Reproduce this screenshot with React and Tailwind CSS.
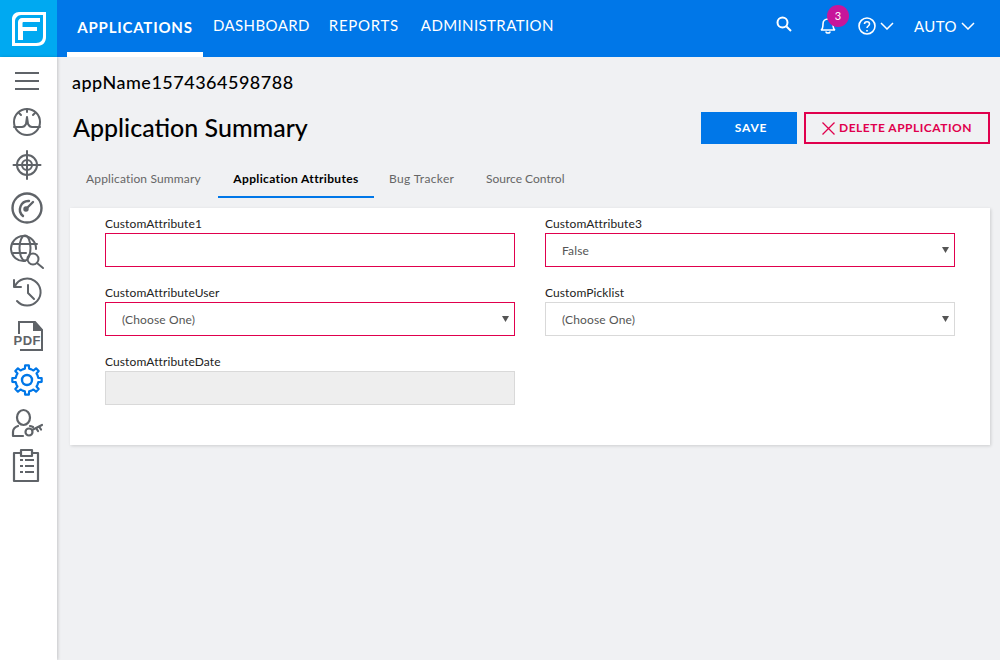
import React from 'react';

const font = { fontFamily: '"Lato", "Open Sans", sans-serif' };

const Logo = () => (
    <svg width="36" height="36" viewBox="0 0 36 36" fill="none">
        <path d="M8 1h27v25c0 5-3 9-9 9H1V8c0-4 3-7 7-7z" fill="#fff" />
        <path d="M10 4h22v21c0 4-2 7-7 7H4V10c0-3 3-6 6-6z" fill="#00a9f1" />
        <path d="M11 7h18v4H12.500c-.5 0-1 .5-1 1v4H26v4H12v9H7V11c0-2 2-4 4-4z" fill="#fff" />
    </svg>
);

// eight toothed gear outline, radius in px
const gearPath = (() => {
    const pts = [];
    const teeth = 8;
    for (let i = 0; i < teeth; i++) {
        const a = (i / teeth) * Math.PI * 2;
        const step = (Math.PI * 2) / teeth;
        [[-0.5, 11.5], [-0.24, 11.5], [-0.16, 14.8], [0.16, 14.8], [0.24, 11.5], [0.5, 11.5]].forEach(([f, r]) => {
            const t = a + f * step;
            pts.push(`${(Math.cos(t) * r).toFixed(2)} ${(Math.sin(t) * r).toFixed(2)}`);
        });
    }
    return `M${pts.join('L')}Z`;
})();

// sidebar drawings, centred on 0,0
const Icon = ({ children, color = '#5f6368', width = 2 }) => (
    <svg width="40" height="40" viewBox="-20 -20 40 40" fill="none" stroke={color} strokeWidth={width} strokeLinecap="round" strokeLinejoin="round">
        {children}
    </svg>
);

const sideItems = [
    {
        slot: 'h-[41px]',
        icon: (
            <Icon>
                <path d="M-12-8h24M-12 0h24M-12 8h24" strokeLinecap="butt" />
            </Icon>
        ),
    },
    {
        slot: 'h-[42px]',
        icon: (
            <Icon>
                <circle cx="0" cy="0" r="13" />
                <path d="M-13 5h8c2 0 3-1 4-3l1-7 1 7c1 2 2 3 4 3h8M0-13v3M-8-9l2 2M8-9l-2 2" />
            </Icon>
        ),
    },
    {
        slot: 'h-[43px]',
        icon: (
            <Icon>
                <circle cx="0" cy="0" r="10" />
                <circle cx="0" cy="0" r="5" />
                <path d="M-13.500 0h27M0-14v28" />
            </Icon>
        ),
    },
    {
        slot: 'h-[44px]',
        icon: (
            <Icon width={2.4}>
                <circle cx="0" cy="0" r="14.500" />
                <path d="M-4 8a8.500 8.500 0 0 1 6-15M-2 2l8-8" />
                <circle cx="-1" cy="1" r="1.500" />
            </Icon>
        ),
    },
    {
        slot: 'h-[40px]',
        icon: (
            <Icon>
                <path d="M9-1a12.500 12.500 0 1 0-11 12" />
                <ellipse cx="-2" cy="-2" rx="5.500" ry="12.500" />
                <path d="M-14-6h24M-14 3h13" />
                <circle cx="6" cy="9" r="5.500" />
                <path d="M10 13l6 5" />
            </Icon>
        ),
    },
    {
        slot: 'h-[44px]',
        icon: (
            <Icon>
                <path d="M-12-6A13.500 13.500 0 1 1-10 9" />
                <path d="M-13-12v7h7M1-7V1l6 6" />
            </Icon>
        ),
    },
    {
        slot: 'h-[44px]',
        icon: (
            <div className="relative ml-[3px] h-[32px] w-[30px]">
                <svg width="30" height="32" viewBox="0 0 30 32" fill="none" stroke="#5f6368" strokeWidth="2">
                    <path d="M5 14V2h16l7 8v20H6" />
                    <path d="M20 2v8h8" fill="#5f6368" />
                </svg>
                <span className="absolute left-0 top-[14px] text-[13px] font-black leading-[14px] tracking-[0.5px] text-[#5f6368]" style={{ fontFamily: '"Liberation Sans", sans-serif' }}>
                    PDF
                </span>
            </div>
        ),
    },
    {
        slot: 'h-[44px]',
        icon: (
            <Icon color="#0077e8" width={2.2}>
                <path d={gearPath} />
                <circle cx="0" cy="0" r="5" strokeWidth="2.400" />
            </Icon>
        ),
    },
    {
        slot: 'h-[42px]',
        icon: (
            <Icon width={2.2}>
                <ellipse cx="-3.500" cy="-5.500" rx="6.500" ry="7.500" />
                <path d="M-14 13V9c0-3 2-5 5-6M3 3c1 0 2 .5 3 1M-14 13h10" />
                <circle cx="2" cy="9" r="3.500" />
                <path d="M5 7l10-5M9 5l2 3M12 3.500l2 3" />
            </Icon>
        ),
    },
    {
        slot: 'h-[41px]',
        icon: (
            <Icon width={2.2}>
                <path d="M-6-12h-7v28h24v-28h-6" strokeLinecap="butt" />
                <path d="M-6-15H5v6H-6z" strokeLinecap="butt" />
                <path d="M-7-5h3M-7 1h3M-7 7h3M-2-5H7M-2 1H7M-2 7H7" strokeLinecap="butt" />
            </Icon>
        ),
    },
];

const Chevron = () => (
    <svg width="14" height="8" viewBox="0 0 14 8" fill="none" stroke="#fff" strokeWidth="1.500">
        <path d="M1 1l6 6 6-6" />
    </svg>
);

const Field = ({ label, children }) => (
    <div className="flex flex-col">
        <label className="h-[17px] text-[12px] leading-[16px] tracking-[0.1px] text-[#222]">{label}</label>
        {children}
    </div>
);

const Select = ({ value, invalid }) => (
    <div className="relative">
        <select
            defaultValue={value}
            className={`h-[34px] w-full appearance-none border bg-white pl-[16px] pt-px text-[12px] tracking-[0.15px] text-[#555] outline-none ${invalid ? 'border-[#e0004d]' : 'border-[#d9d9d9]'}`}
        >
            <option>{value}</option>
        </select>
        <svg className="pointer-events-none absolute right-[6px] top-[14px]" width="7" height="6" viewBox="0 0 7 6">
            <path d="M0 0h7L3.500 6z" fill="#555" />
        </svg>
    </div>
);

const App = () => {
    return (
        <div className="flex h-[660px] w-[1000px] flex-col overflow-hidden bg-[#f0f1f3]" style={font}>
            <header className="flex h-[57px] shrink-0 bg-[#0077e8] text-white">
                <div className="flex w-[57px] shrink-0 items-center justify-center bg-[#00a9f1]">
                    <Logo />
                </div>
                <nav className="ml-[10px] flex h-full whitespace-nowrap text-[15px] tracking-[0.4px]">
                    <a className="flex h-full w-[136px] items-center justify-center border-b-[5px] border-white pt-[3px] font-bold tracking-[0.8px]">APPLICATIONS</a>
                    <a className="ml-[10px] leading-[51px]">DASHBOARD</a>
                    <a className="ml-[19px] leading-[51px] tracking-[0.7px]">REPORTS</a>
                    <a className="ml-[22px] leading-[51px]">ADMINISTRATION</a>
                </nav>
                <div className="ml-auto flex items-center pb-[5px]">
                    <svg width="16" height="16" viewBox="0 0 16 16" fill="none" stroke="#fff" strokeWidth="2" className="mb-[4px]">
                        <circle cx="6.500" cy="6.500" r="5" />
                        <path d="M10.500 10.500L15 15" />
                    </svg>
                    <div className="relative mb-[3px] ml-[28px] h-[18px] w-[16px]">
                        <svg width="16" height="18" viewBox="0 0 16 18" fill="none" stroke="#fff" strokeWidth="1.600">
                            <path d="M1 14c2-1 2-3 2-6 0-3 2-5 5-5s5 2 5 5c0 3 0 5 2 6z" />
                            <path d="M6 15.500c0 2 4 2 4 0" />
                        </svg>
                        <span className="absolute left-[7px] top-[-11px] flex h-[22px] w-[22px] items-center justify-center rounded-full bg-[#c7169a] text-[11px] leading-none">
                            3
                        </span>
                    </div>
                    <svg width="18" height="18" viewBox="0 0 18 18" fill="none" stroke="#fff" strokeWidth="1.600" className="ml-[22px]">
                        <circle cx="9" cy="9" r="8" />
                        <path d="M6.500 7c0-3 5-3 5 0 0 2-2.500 2-2.500 4" />
                        <path d="M9 13v1.500" />
                    </svg>
                    <span className="ml-[4px]"><Chevron /></span>
                    <span className="ml-[20px] text-[15px] tracking-[0.45px]">AUTO</span>
                    <span className="ml-[4px] mr-[25px]"><Chevron /></span>
                </div>
            </header>

            <div className="flex min-h-0 flex-1">
                <aside className="box-border w-[57px] shrink-0 bg-white pr-[3px] pt-[3px] shadow-[1px_0_3px_rgba(0,0,0,0.18)]">
                    {sideItems.map((item, i) => (
                        <div key={i} className={`flex items-center justify-center ${item.slot}`}>
                            {item.icon}
                        </div>
                    ))}
                </aside>

                <main className="min-w-0 flex-1 pl-[13px] pr-[10px]">
                    <div className="pl-[2px] pt-[13px] text-[18px] font-medium leading-[24px] tracking-[0.5px] text-black">appName1574364598788</div>
                    <div className="mt-[6px] flex h-[56px] items-center justify-between">
                        <h1 className="pl-[3px] pb-[3px] text-[25px] font-medium leading-[32px] text-black">Application Summary</h1>
                        <div className="flex gap-[7px]">
                            <button className="h-[32px] w-[96px] bg-[#0077e8] pl-[4px] text-[12px] font-bold tracking-[0.8px] text-white">SAVE</button>
                            <button className="flex h-[32px] w-[186px] items-center justify-center gap-[4px] border-2 border-[#e0004d] text-[12px] font-bold tracking-[0.5px] text-[#e0004d]">
                                <svg width="13" height="13" viewBox="0 0 13 13" fill="none" stroke="#e0004d" strokeWidth="1.300">
                                    <path d="M0.500 0.500l12 12M12.500 0.500l-12 12" />
                                </svg>
                                DELETE APPLICATION
                            </button>
                        </div>
                    </div>
                    <div className="flex h-[42px] whitespace-nowrap text-[12px] leading-[46px] text-[#666]">
                        <div className="w-[148px] pl-[16px] tracking-[0.15px]">Application Summary</div>
                        <div className="w-[156px] border-b-2 border-[#0077e8] text-center font-bold tracking-[0.35px] text-black">Application Attributes</div>
                        <div className="ml-[15px] w-[65px] tracking-[0.35px]">Bug Tracker</div>
                        <div className="ml-[32px]">Source Control</div>
                    </div>
                    <section className="mt-[10px] h-[237px] bg-white pl-[35px] pt-[8px] shadow-[1px_1px_3px_rgba(0,0,0,0.15)]">
                        <div className="grid w-[850px] grid-cols-2 gap-x-[30px] gap-y-[18px]">
                            <Field label="CustomAttribute1">
                                <input className="h-[34px] w-full border border-[#e0004d] bg-white outline-none" />
                            </Field>
                            <Field label="CustomAttribute3">
                                <Select value="False" invalid />
                            </Field>
                            <Field label="CustomAttributeUser">
                                <Select value="(Choose One)" invalid />
                            </Field>
                            <Field label="CustomPicklist">
                                <Select value="(Choose One)" />
                            </Field>
                            <Field label="CustomAttributeDate">
                                <input disabled className="h-[34px] w-full border border-[#d9d9d9] bg-[#eeeeee] outline-none" />
                            </Field>
                        </div>
                    </section>
                </main>
            </div>
        </div>
    );
};

export default App;
